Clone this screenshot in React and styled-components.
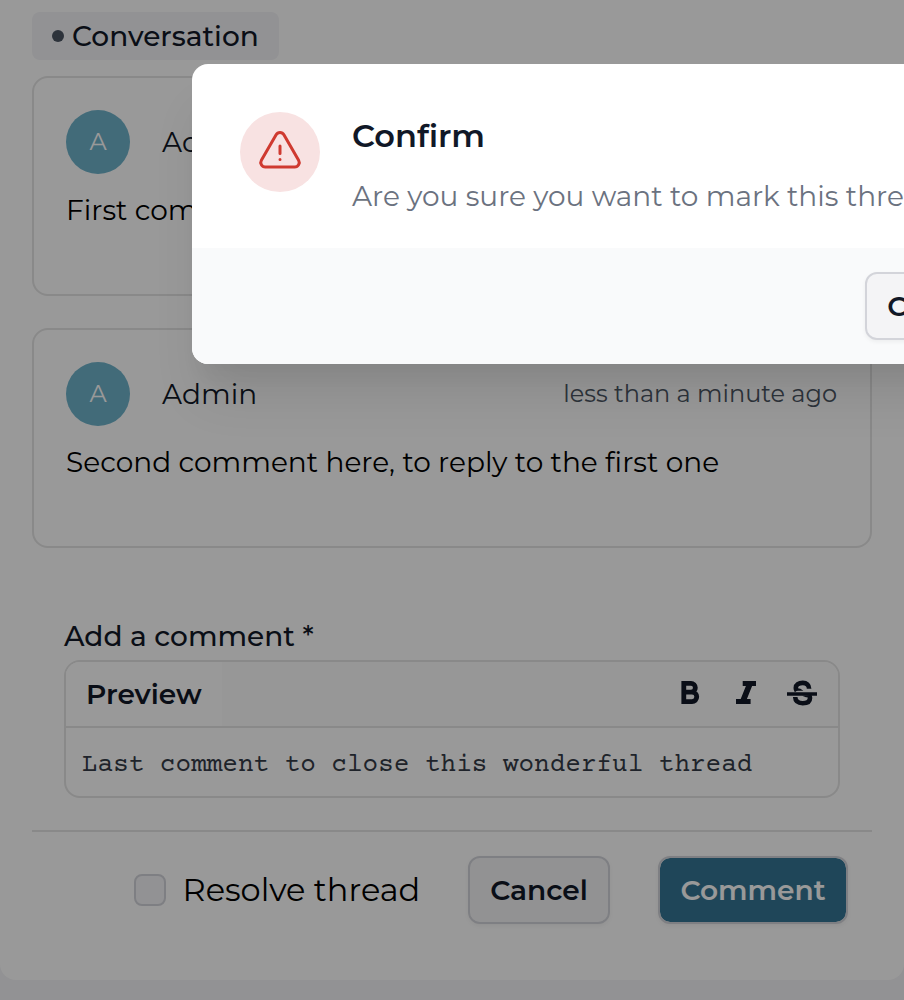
import React from 'react';
import styled, { createGlobalStyle } from 'styled-components';

const GlobalStyle = createGlobalStyle`
  *, *::before, *::after { box-sizing: border-box; }
  body {
    margin: 0;
    background: #f4f4f7;
    font-family: Montserrat, Inter, "Open Sans", sans-serif;
    font-size: 28px;
    line-height: 40px;
    color: #000;
    overflow: hidden;
  }
`;

const Page = styled.div`
  position: relative;
  width: 904px;
  height: 1000px;
  overflow: hidden;
`;

const Panel = styled.main`
  height: 980px;
  padding: 12px 32px 0;
  background: #fff;
  border-radius: 0 0 16px 16px;
`;

const Text = styled.span`
  display: block;
  white-space: nowrap;
  font-size: ${(p) => p.$size || 28}px;
  font-weight: ${(p) => p.$weight || 400};
  color: ${(p) => p.$color || '#000'};
`;

const Tag = styled.div`
  display: flex;
  align-items: center;
  gap: 8px;
  width: 247px;
  height: 48px;
  padding-left: 20px;
  background: #f4f4f7;
  border-radius: 8px;
`;

const Dot = styled.span`
  width: 12px;
  height: 12px;
  border-radius: 50%;
  background: #4b5563;
`;

const Thread = styled.section`
  display: flex;
  flex-direction: column;
  gap: 32px;
  margin-top: 16px;
`;

const Card = styled.article`
  height: 220px;
  padding: 32px;
  border: 2px solid #e5e5e5;
  border-radius: 16px;
`;

const CardHead = styled.header`
  display: flex;
  align-items: center;
  height: 64px;
  margin-bottom: 16px;
`;

const Avatar = styled.div`
  display: flex;
  align-items: center;
  justify-content: center;
  width: 64px;
  height: 64px;
  margin-right: 32px;
  border-radius: 50%;
  background: #6eb2ca;
`;

const Time = styled(Text)`
  margin-left: auto;
  padding-right: 1px;
`;

const Form = styled.section`
  padding: 68px 32px 0;
`;

const Editor = styled.div`
  height: 138px;
  margin-top: 4px;
  border: 2px solid #e5e5e5;
  border-radius: 16px;
  overflow: hidden;
`;

const Toolbar = styled.div`
  display: flex;
  align-items: center;
  height: 66px;
  padding-right: 20px;
  border-bottom: 2px solid #e5e5e5;
  background: #fcfcfc;
`;

const Tab = styled.div`
  display: flex;
  align-items: center;
  width: 156px;
  height: 64px;
  padding-left: 20px;
  background: #fff;
`;

const Tools = styled.div`
  display: flex;
  align-items: center;
  gap: 24px;
  margin-left: auto;
  padding-bottom: 2px;
`;

const Source = styled.div`
  padding: 18px 16px;
  white-space: pre;
  font-family: "Courier Prime", "Liberation Mono", monospace;
  font-size: 26px;
  color: #343b47;
`;

const Footer = styled.footer`
  display: flex;
  align-items: center;
  justify-content: flex-end;
  height: 118px;
  margin-top: 32px;
  padding: 0 24px;
  border-top: 2px solid #e5e5e5;
`;

const Checkbox = styled.span`
  width: 32px;
  height: 32px;
  margin-right: 16.5px;
  border: 2px solid #d3d4da;
  border-radius: 8px;
  background: #f4f4f7;
`;

const CheckLabel = styled.label`
  display: flex;
  align-items: center;
  width: 334px;
`;

const Button = styled.button`
  display: flex;
  align-items: center;
  justify-content: center;
  flex: none;
  width: ${(p) => p.$width}px;
  height: 68px;
  padding: 0;
  font: inherit;
  border: 2px solid #d3d4da;
  border-radius: 12px;
  background: ${(p) => (p.$primary ? '#357694' : '#f4f4f6')};
  background-clip: padding-box;
  box-shadow: 0 2px 4px rgba(0, 0, 0, 0.05);
`;

const Actions = styled.div`
  display: flex;
  gap: 48px;
`;

const Overlay = styled.div`
  position: absolute;
  inset: 0;
  padding: 64px 0 0 192px;
  background: rgba(0, 0, 0, 0.4);
`;

const Modal = styled.div`
  width: 1024px;
  height: 300px;
  border-radius: 16px;
  overflow: hidden;
  background: #fff;
  box-shadow: 0 40px 50px -10px rgba(0, 0, 0, 0.1), 0 20px 20px -10px rgba(0, 0, 0, 0.04);
`;

const ModalBody = styled.div`
  display: flex;
  gap: 32px;
  height: 184px;
  padding: 48px;
`;

const AlertBadge = styled.div`
  display: flex;
  align-items: center;
  justify-content: center;
  width: 80px;
  height: 80px;
  border-radius: 50%;
  background: #f8e2e2;
`;

const ModalCopy = styled.div`
  display: flex;
  flex-direction: column;
  gap: 20px;
  padding-top: 4px;
`;

const ModalFooter = styled.div`
  height: 116px;
  padding: 24px 0 0 673px;
  background: #f9fafb;
`;

const INK = '#111827';

function AlertIcon() {
  return (
    <svg width="48" height="48" viewBox="0 0 24 24" fill="none" stroke="#cf3a30" strokeWidth="1.5" strokeLinecap="round" strokeLinejoin="round">
      <path d="M12 9v3.75m-9.303 3.376c-.866 1.5.217 3.374 1.948 3.374h14.71c1.73 0 2.813-1.874 1.948-3.374L13.949 3.378c-.866-1.5-3.032-1.5-3.898 0L2.697 16.126ZM12 15.75h.007v.008H12v-.008Z" />
    </svg>
  );
}

function BoldIcon() {
  return (
    <svg width="32" height="32" viewBox="0 0 32 32" fill="none" stroke={INK} strokeWidth="4.8">
      <path d="M9.8 6.4h7.2a4 4 0 0 1 0 8.7H9.8zM9.8 15.1h8.2a4.4 4.4 0 0 1 0 9.5H9.8z" />
    </svg>
  );
}

function ItalicIcon() {
  return (
    <svg width="32" height="32" viewBox="0 0 32 32" fill={INK}>
      <path d="M12.7 4H26v5h-3.9l-5.2 13h3.7v5H6v-5h4.7L15.9 9h-3.2z" />
    </svg>
  );
}

function StrikeIcon() {
  return (
    <svg width="32" height="32" viewBox="0 0 32 32" fill="none" stroke={INK}>
      <path strokeWidth="4.6" d="M23.1 11.7c0-3.8-2.4-5.8-6.3-5.8-4.1 0-7 1.9-7 5 0 1.2.3 2.1.9 2.9M9.2 20c.2 4.1 3.1 6.2 7.5 6.2 4.6 0 7.3-1.9 7.3-5.2 0-1-.2-2-.9-2.8" />
      <path strokeWidth="3.7" d="M1 17h30" />
      <path fill={INK} stroke="none" d="M9 13.8h8.4l-3-2-5.4-1zM24.5 18v2.5l-4.5-.3-4-1.5z" />
    </svg>
  );
}

function Comment({ children }) {
  return (
    <Card>
      <CardHead>
        <Avatar><Text $size={24} $color="#fff">A</Text></Avatar>
        <Text $color={INK}>Admin</Text>
        <Time $size={24} $color="#4b5563">less than a minute ago</Time>
      </CardHead>
      <Text>{children}</Text>
    </Card>
  );
}

export default function App() {
  return (
    <Page>
      <GlobalStyle />
      <Panel>
        <Tag>
          <Dot />
          <Text $weight={500} $color={INK}>Conversation</Text>
        </Tag>
        <Thread>
          <Comment>First comment</Comment>
          <Comment>Second comment here, to reply to the first one</Comment>
        </Thread>
        <Form>
          <Text $weight={500} $color={INK}>Add a comment *</Text>
          <Editor>
            <Toolbar>
              <Tab><Text $weight={600} $color={INK}>Preview</Text></Tab>
              <Tools>
                <BoldIcon />
                <ItalicIcon />
                <StrikeIcon />
              </Tools>
            </Toolbar>
            <Source>Last comment to close this wonderful thread</Source>
          </Editor>
        </Form>
        <Footer>
          <CheckLabel>
            <Checkbox />
            <Text $size={32}>Resolve thread</Text>
          </CheckLabel>
          <Actions>
            <Button $width={142}><Text $weight={600} $color={INK}>Cancel</Text></Button>
            <Button $width={190} $primary><Text $weight={600} $color="#fff">Comment</Text></Button>
          </Actions>
        </Footer>
      </Panel>
      <Overlay>
        <Modal>
          <ModalBody>
            <AlertBadge><AlertIcon /></AlertBadge>
            <ModalCopy>
              <Text $size={32} $weight={600} $color={INK}>Confirm</Text>
              <Text $color="#6b7280">Are you sure you want to mark this thread as resolved?</Text>
            </ModalCopy>
          </ModalBody>
          <ModalFooter>
            <Button $width={142}><Text $weight={600} $color={INK}>Cancel</Text></Button>
          </ModalFooter>
        </Modal>
      </Overlay>
    </Page>
  );
}
